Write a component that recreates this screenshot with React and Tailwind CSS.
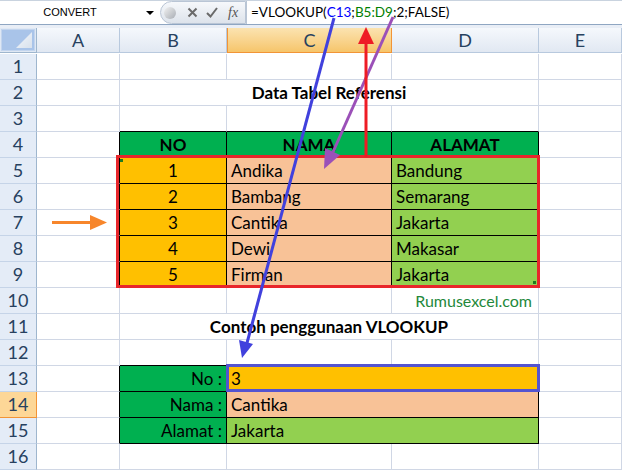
import React from "react";

const cols = ["A", "B", "C", "D", "E"];
const grid = "border-r border-b border-[#d0d7e5]";
const base = "flex items-center overflow-hidden whitespace-nowrap px-[4px] text-[17px]";

// each row: list of cells {c: classes, t: text}
const blank = (extra = {}) =>
  cols.map((_, i) => ({ c: extra[i] || "" }));

const tableRow = (no, nama, alamat) => [
  { c: "border-r-black" },
  { c: "bg-[#ffc000] border-r-black border-b-black justify-center", t: no },
  { c: "bg-[#f8c297] border-r-black border-b-black", t: nama },
  { c: "bg-[#92d050] border-r-black border-b-black", t: alamat },
  { c: "" },
];

const lookupRow = (label, value, bg) => [
  { c: "border-r-black" },
  { c: "bg-[#00b050] border-r-black border-b-black justify-end", t: label },
  { c: `col-span-2 border-r-black border-b-black ${bg}`, t: value },
  { c: "" },
];

const rows = [
  blank(),
  [
    { c: "" },
    { c: "col-span-3 justify-center font-bold", t: "Data Tabel Referensi" },
    { c: "" },
  ],
  blank({ 1: "border-b-black", 2: "border-b-black", 3: "border-b-black" }),
  [
    { c: "border-r-black" },
    { c: "bg-[#00b050] border-r-black border-b-black justify-center font-bold", t: "NO" },
    { c: "bg-[#00b050] border-r-black border-b-black justify-center font-bold", t: "NAMA" },
    { c: "bg-[#00b050] border-r-black border-b-black justify-center font-bold", t: "ALAMAT" },
    { c: "" },
  ],
  tableRow("1", "Andika", "Bandung"),
  tableRow("2", "Bambang", "Semarang"),
  tableRow("3", "Cantika", "Jakarta"),
  tableRow("4", "Dewi", "Makasar"),
  tableRow("5", "Firman", "Jakarta"),
  [
    { c: "" },
    { c: "" },
    { c: "" },
    { c: "justify-end pr-[6px] !text-[16px] !text-[#23883a]", t: "Rumusexcel.com" },
    { c: "" },
  ],
  [
    { c: "" },
    { c: "col-span-3 justify-center font-bold", t: "Contoh penggunaan VLOOKUP" },
    { c: "" },
  ],
  blank({ 1: "border-b-black", 2: "border-b-black", 3: "border-b-black" }),
  lookupRow("No :", "3", "bg-[#ffc000]"),
  lookupRow("Nama :", "Cantika", "bg-[#f8c297]"),
  lookupRow("Alamat :", "Jakarta", "bg-[#92d050]"),
  blank(),
];

function FormulaBar() {
  return (
    <div className="flex h-[25px] border-t border-t-[#c9d3df] border-b border-b-[#8fa6c2] bg-white">
      <div className="flex w-[140px] items-center justify-center text-[11px] text-black font-['Liberation_Sans',sans-serif]">
        CONVERT
      </div>
      <div className="flex w-[20px] items-center justify-start pl-[6px]">
        <div className="h-0 w-0 border-l-[4px] border-r-[4px] border-t-[4px] border-l-transparent border-r-transparent border-t-black" />
      </div>
      <div className="flex w-[86px] items-center gap-[8px] rounded-l-full border border-[#b9c5d5] bg-gradient-to-b from-[#f6f8fb] to-[#dde3eb] pl-[3px]">
        <div className="h-[12px] w-[12px] rounded-full bg-gradient-to-br from-[#f2f2f2] to-[#a8adb4]" />
        <svg width="11" height="11" viewBox="0 0 11 11" className="ml-[3px]">
          <path d="M1.5 1.5 L9.5 9.5 M9.5 1.5 L1.5 9.5" stroke="#6a6a6a" strokeWidth="2" />
        </svg>
        <svg width="12" height="11" viewBox="0 0 12 11">
          <path d="M1 6 L4.5 9.5 L11 1" stroke="#6a6a6a" strokeWidth="2" fill="none" />
        </svg>
        <span className="ml-[2px] font-['Liberation_Serif',serif] text-[14px] italic text-[#555]">fx</span>
      </div>
      <div className="flex flex-1 items-center border-l border-[#b9c5d5] pl-[4px] text-[13.5px] font-['Lato',sans-serif] text-black">
        =VLOOKUP(<span className="text-[#0000ff]">C13</span>;<span className="text-[#008000]">B5:D9</span>;2;FALSE)
      </div>
    </div>
  );
}

function Arrows() {
  return (
    <svg className="pointer-events-none absolute left-0 top-0" width="622" height="471">
      {/* blue */}
      <line x1="334" y1="18" x2="247" y2="343" stroke="#4141dd" strokeWidth="3" />
      <polygon points="242,358 253,344 239,340" fill="#4141dd" />
      {/* purple */}
      <line x1="393" y1="17" x2="333" y2="152" stroke="#9b50b8" strokeWidth="3" />
      <polygon points="324,169 340,155 325,148" fill="#9b50b8" />
      {/* red */}
      <line x1="366" y1="157" x2="366" y2="42" stroke="#ee1c25" strokeWidth="3" />
      <polygon points="366,27 358,44 374,44" fill="#ee1c25" />
      {/* orange */}
      <line x1="52" y1="222.5" x2="92" y2="222.5" stroke="#f7862b" strokeWidth="3" />
      <polygon points="107,222.5 90,215 90,230" fill="#f7862b" />
    </svg>
  );
}

export default function App() {
  return (
    <div className="relative h-[471px] w-[622px] overflow-hidden bg-white font-['Lato',sans-serif] text-black">
      <FormulaBar />
      <div className="h-[3px] bg-[#e9eef6]" />

      <div className="grid grid-cols-[37px_83px_107px_165px_147px_83px] auto-rows-[26px]">
        {/* column headers */}
        <div className="h-[25px] border-r border-b border-[#9eb6ce] bg-[#dfe8f4] p-[1px]">
          <div className="relative h-full w-full border border-[#c3d5ee] bg-[#a9c4e9]">
            <svg className="absolute bottom-[2px] right-[2px]" width="16" height="16">
              <defs>
                <linearGradient id="tri" x1="0" y1="0" x2="1" y2="1">
                  <stop offset="0" stopColor="#f4f7fb" />
                  <stop offset="1" stopColor="#d8e1ec" />
                </linearGradient>
              </defs>
              <polygon points="16,0 16,16 0,16" fill="url(#tri)" />
            </svg>
          </div>
        </div>
        {cols.map((c) => (
          <div
            key={c}
            className={
              c === "C"
                ? "flex h-[25px] items-center justify-center border-l border-r border-b border-[#f29436] bg-gradient-to-b from-[#fbe3b0] to-[#f6c56a] text-[18px] text-[#27415f]"
                : "flex h-[25px] items-center justify-center border-r border-b border-[#b8c9de] bg-gradient-to-b from-[#f5f8fc] to-[#e1e8f2] text-[18px] text-[#27415f]"
            }
          >
            {c}
          </div>
        ))}

        {rows.map((cells, r) => (
          <React.Fragment key={r}>
            <div
              className={
                r === 13
                  ? "flex items-center justify-center border-r border-b border-[#f29436] bg-[#fdd797] text-[18px] text-[#27415f]"
                  : "flex items-center justify-center border-r border-r-[#9eb6ce] border-b border-b-[#c5d4e8] bg-[#e4ecf7] text-[18px] text-[#27415f]"
              }
            >
              {r + 1}
            </div>
            {cells.map((cell, i) => (
              <div key={i} className={`${grid} ${base} ${cell.c}`}>
                {cell.t}
              </div>
            ))}
          </React.Fragment>
        ))}
      </div>

      {/* red outline around reference table */}
      <div className="absolute left-[116px] top-[155px] h-[133px] w-[424px] border-[3px] border-[#e8262b]">
        <div className="absolute left-[1px] top-[1px] h-[3px] w-[3px] bg-[#1f7a1f]" />
        <div className="absolute bottom-[1px] right-[1px] h-[3px] w-[3px] bg-[#1f7a1f]" />
      </div>

      {/* active cell selection */}
      <div className="absolute left-[226px] top-[364px] h-[28px] w-[314px] border-[3px] border-[#5454d0]" />

      <Arrows />
    </div>
  );
}
